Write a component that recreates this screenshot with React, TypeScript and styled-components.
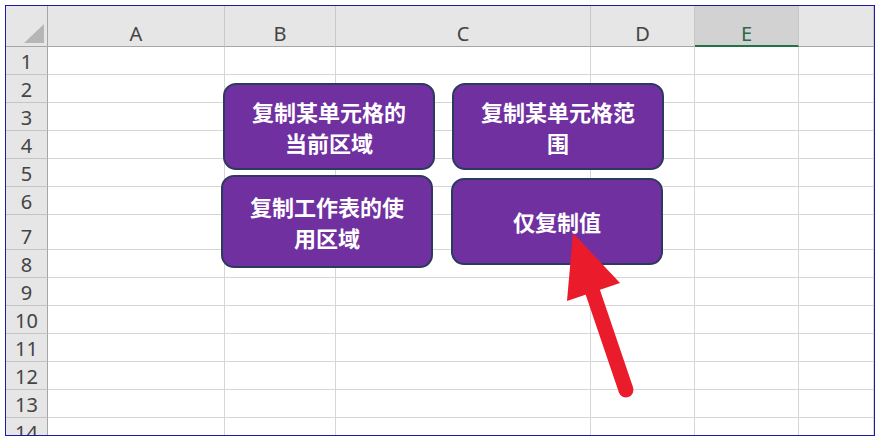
import styled, {createGlobalStyle} from 'styled-components';

const GlobalStyle = createGlobalStyle`
  html, body {
    margin: 0;
    padding: 0;
    background: #ffffff;
  }
  body {
    font-family: 'Noto Sans', 'Noto Sans CJK SC', sans-serif;
  }
`;

const columns = [
  {name: 'A', width: 177},
  {name: 'B', width: 111},
  {name: 'C', width: 255},
  {name: 'D', width: 104},
  {name: 'E', width: 104},
  {name: '', width: 0},
];
const selectedColumn = 'E';

const rows = [28, 28, 28, 28, 28, 28, 35, 28, 28, 28, 28, 28, 28, 28];

const shapes = [
  {label: '复制某单元格的当前区域', left: 217, top: 77, width: 212, height: 87},
  {label: '复制某单元格范围', left: 446, top: 77, width: 212, height: 87},
  {label: '复制工作表的使用区域', left: 215, top: 169, width: 212, height: 93},
  {label: '仅复制值', left: 445, top: 172, width: 212, height: 87},
];

const Page = styled.div`
  padding: 5px;
`;

const Frame = styled.div`
  position: relative;
  width: 870px;
  height: 431px;
  box-sizing: border-box;
  border: 1px solid #1a1aa6;
  overflow: hidden;
`;

const Sheet = styled.div<{$cols: string; $rows: string}>`
  display: grid;
  grid-template-columns: ${({$cols}) => $cols};
  grid-template-rows: ${({$rows}) => $rows};
  font-family: 'Noto Sans', sans-serif;
  font-size: 20px;
  color: #444444;
`;

const Corner = styled.div`
  display: flex;
  align-items: flex-end;
  justify-content: flex-end;
  padding: 0 3px 3px 0;
  box-sizing: border-box;
  background: #e6e6e6;
  border-right: 1px solid #a6a6a6;
  border-bottom: 1px solid #a6a6a6;
`;

const CornerTriangle = styled.div`
  width: 0;
  height: 0;
  border-left: 20px solid transparent;
  border-bottom: 19px solid #b6b6b6;
`;

const ColHeader = styled.div<{$selected: boolean}>`
  display: flex;
  align-items: flex-end;
  justify-content: center;
  box-sizing: border-box;
  padding-bottom: ${({$selected}) => ($selected ? '1px' : '2px')};
  line-height: 1;
  background: ${({$selected}) => ($selected ? '#d2d2d2' : '#e6e6e6')};
  color: ${({$selected}) => ($selected ? '#2a6a47' : '#444444')};
  border-right: 1px solid #c8c8c8;
  border-bottom: ${({$selected}) =>
    $selected ? '2px solid #217346' : '1px solid #a6a6a6'};
`;

const RowHeader = styled.div`
  display: flex;
  align-items: flex-end;
  justify-content: center;
  box-sizing: border-box;
  padding-bottom: 2px;
  line-height: 1;
  background: #e6e6e6;
  border-right: 1px solid #a6a6a6;
  border-bottom: 1px solid #c4c4c4;
`;

const Cell = styled.div`
  box-sizing: border-box;
  background: #ffffff;
  border-right: 1px solid #d6d6d6;
  border-bottom: 1px solid #d6d6d6;
`;

const ShapeButton = styled.div`
  position: absolute;
  display: flex;
  align-items: center;
  justify-content: center;
  box-sizing: border-box;
  padding: 0 18px;
  background: #7030a0;
  border: 2px solid #2c3a5e;
  border-radius: 13px;
  color: #ffffff;
  font-family: 'Noto Sans CJK SC', sans-serif;
  font-weight: 700;
  font-size: 22px;
  line-height: 31px;
  text-align: center;
  word-break: break-all;
`;

const ArrowLayer = styled.svg`
  position: absolute;
  left: 0;
  top: 0;
  pointer-events: none;
`;

const App = () => {
  const colTemplate = ['42px', ...columns.map(c => (c.width ? `${c.width}px` : '1fr'))].join(' ');
  const rowTemplate = ['41px', ...rows.map(h => `${h}px`)].join(' ');

  return (
    <>
      <GlobalStyle />
      <Page>
        <Frame>
          <Sheet $cols={colTemplate} $rows={rowTemplate}>
            <Corner>
              <CornerTriangle />
            </Corner>
            {columns.map(c => (
              <ColHeader key={`h${c.name}`} $selected={c.name === selectedColumn}>
                {c.name}
              </ColHeader>
            ))}
            {rows.map((_, r) => (
              <>
                <RowHeader key={`r${r}`}>{r + 1}</RowHeader>
                {columns.map(c => (
                  <Cell key={`c${r}${c.name}`} />
                ))}
              </>
            ))}
          </Sheet>

          {shapes.map(s => (
            <ShapeButton
              key={s.label}
              style={{left: s.left, top: s.top, width: s.width, height: s.height}}
            >
              {s.label}
            </ShapeButton>
          ))}

          {/* 红色箭头 */}
          <ArrowLayer width="868" height="429" viewBox="0 0 868 429">
            <line
              x1="620"
              y1="384"
              x2="584"
              y2="278"
              stroke="#ea1c2c"
              strokeWidth="15"
              strokeLinecap="round"
            />
            <polygon points="567,227 561,295 614,277" fill="#ea1c2c" />
          </ArrowLayer>
        </Frame>
      </Page>
    </>
  );
};

export default App;
